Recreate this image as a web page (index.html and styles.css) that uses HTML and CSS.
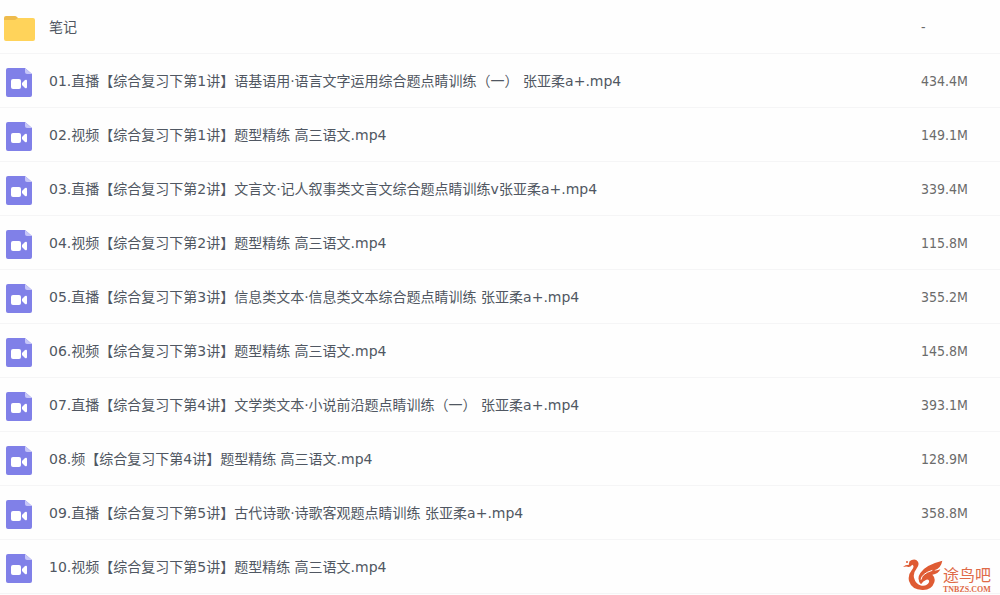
FILE: index.html
```
<!DOCTYPE html>
<html lang="zh-CN">
<head>
<meta charset="utf-8">
<title>笔记</title>
<link rel="stylesheet" href="styles.css">
</head>
<body>
<svg class="defs" aria-hidden="true">
  <symbol id="video" viewBox="0 0 26 30">
    <path fill="#8080e8" d="M2 0H19L26 6V27Q26 29 24 29H2Q0 29 0 27V2Q0 0 2 0Z"/>
    <path fill="#c6c6f8" d="M19 0L26 6H21Q19 6 19 4Z"/>
    <rect x="5" y="11" width="10" height="10" rx="2" fill="#fff"/>
    <path fill="#fff" d="M16 15L19 12Q21 11 21 13V19Q21 21 19 20L16 17Z"/>
  </symbol>
</svg>
<main>
<table class="files">
<tbody>
<tr><td class="icon"><svg class="folder" viewBox="0 0 31 26"><path fill="#eebb4c" d="M2 0H11Q12 0 13 1L15 3V8H0V2Q0 0 2 0Z"/><path fill="#ffd35a" d="M0 4H11L14 2H29Q31 2 31 4V23Q31 25 29 25H2Q0 25 0 23Z"/></svg></td><td class="name">笔记</td><td class="size">-</td></tr>
<tr><td class="icon"><svg class="video"><use href="#video"/></svg></td><td class="name">01.直播【综合复习下第1讲】语基语用·语言文字运用综合题点睛训练（一） 张亚柔a+.mp4</td><td class="size">434.4M</td></tr>
<tr><td class="icon"><svg class="video"><use href="#video"/></svg></td><td class="name">02.视频【综合复习下第1讲】题型精练 高三语文.mp4</td><td class="size">149.1M</td></tr>
<tr><td class="icon"><svg class="video"><use href="#video"/></svg></td><td class="name">03.直播【综合复习下第2讲】文言文·记人叙事类文言文综合题点睛训练v张亚柔a+.mp4</td><td class="size">339.4M</td></tr>
<tr><td class="icon"><svg class="video"><use href="#video"/></svg></td><td class="name">04.视频【综合复习下第2讲】题型精练 高三语文.mp4</td><td class="size">115.8M</td></tr>
<tr><td class="icon"><svg class="video"><use href="#video"/></svg></td><td class="name">05.直播【综合复习下第3讲】信息类文本·信息类文本综合题点睛训练 张亚柔a+.mp4</td><td class="size">355.2M</td></tr>
<tr><td class="icon"><svg class="video"><use href="#video"/></svg></td><td class="name">06.视频【综合复习下第3讲】题型精练 高三语文.mp4</td><td class="size">145.8M</td></tr>
<tr><td class="icon"><svg class="video"><use href="#video"/></svg></td><td class="name">07.直播【综合复习下第4讲】文学类文本·小说前沿题点睛训练（一） 张亚柔a+.mp4</td><td class="size">393.1M</td></tr>
<tr><td class="icon"><svg class="video"><use href="#video"/></svg></td><td class="name">08.频【综合复习下第4讲】题型精练 高三语文.mp4</td><td class="size">128.9M</td></tr>
<tr><td class="icon"><svg class="video"><use href="#video"/></svg></td><td class="name">09.直播【综合复习下第5讲】古代诗歌·诗歌客观题点睛训练 张亚柔a+.mp4</td><td class="size">358.8M</td></tr>
<tr><td class="icon"><svg class="video"><use href="#video"/></svg></td><td class="name">10.视频【综合复习下第5讲】题型精练 高三语文.mp4</td><td class="size"></td></tr>
</tbody>
</table>
</main>
<div class="brand">
  <svg class="bird" viewBox="0 0 120 96">
    <g fill="#df5b33">
      <path d="M0 24Q6 17 18 17Q16 6 26 3Q38 -2 45 8Q50 18 40 30Q30 42 33 56Q38 76 56 80Q72 82 78 70Q80 60 70 62Q60 66 54 76Q40 60 52 42Q66 18 118 5Q114 28 94 34Q104 35 112 31Q106 46 88 47Q98 56 94 70Q86 94 58 93Q26 92 18 66Q14 48 26 34Q36 22 28 17Q20 26 14 23Q8 22 0 24Z"/>
      <circle cx="12" cy="9" r="3"/>
    </g>
    <path fill="none" stroke="#fff" stroke-width="3" d="M54 62Q56 44 88 34"/>
  </svg>
  <div class="brand-text"><span class="brand-name">途鸟吧</span><span class="brand-site">TNBZS.COM</span></div>
</div>
</body>
</html>
```
FILE: styles.css
```
body {
  margin: 0;
  background: #fefefe;
  color: #505762;
  font: 14px/20px "DejaVu Sans", "Noto Sans CJK SC", sans-serif;
}

.defs {
  position: absolute;
  width: 0;
  height: 0;
}

.files {
  width: 100%;
  border-collapse: separate;
  border-spacing: 0;
}

.files td {
  box-sizing: border-box;
  height: 54px;
  padding: 0;
  border-bottom: 1px solid #f5f5f6;
  vertical-align: middle;
}

.files .icon {
  width: 49px;
  padding-top: 4px;
  padding-left: 6px;
}

.icon svg {
  display: block;
}

.files .icon:has(.folder) {
  padding-left: 4px;
}

.folder {
  width: 31px;
  height: 26px;
}

.video {
  width: 26px;
  height: 30px;
}

.files .size {
  width: 79px;
  color: #6b6b6b;
  font-family: "DejaVu Sans Condensed", "DejaVu Sans", sans-serif;
}

.brand {
  position: absolute;
  right: 9px;
  top: 559px;
  display: flex;
  color: #df6a48;
}

.bird {
  width: 40px;
  height: 32px;
}

.brand-text {
  display: flex;
  flex-direction: column;
  padding-top: 7px;
}

.brand-name {
  font: 16px/20px "Liberation Sans", "Noto Sans CJK SC", sans-serif;
}

.brand-site {
  font: bold 8px/8px "Liberation Serif", serif;
}
```
